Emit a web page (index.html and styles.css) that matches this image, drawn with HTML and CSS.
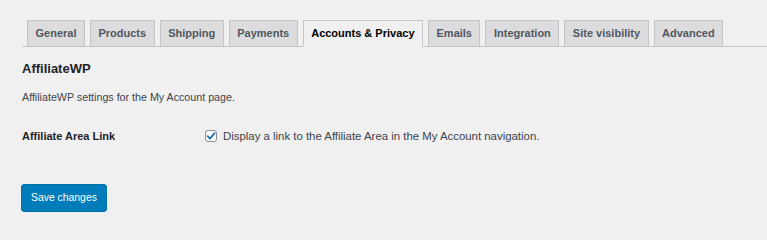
FILE: index.html
```html
<!DOCTYPE html>
<html lang="en">
<head>
<meta charset="utf-8">
<title>Accounts &amp; Privacy</title>
<link rel="stylesheet" href="styles.css">
</head>
<body>
<div class="wrap">
  <nav class="nav-tabs">
    <a class="tab">General</a>
    <a class="tab">Products</a>
    <a class="tab">Shipping</a>
    <a class="tab">Payments</a>
    <a class="tab active">Accounts &amp; Privacy</a>
    <a class="tab">Emails</a>
    <a class="tab">Integration</a>
    <a class="tab">Site visibility</a>
    <a class="tab">Advanced</a>
  </nav>
  <h2 class="section-title">AffiliateWP</h2>
  <p class="desc">AffiliateWP settings for the My Account page.</p>
  <div class="field-row">
    <div class="field-label">Affiliate Area Link</div>
    <label class="field-control">
      <span class="checkbox"><svg width="10" height="10" viewBox="0 0 10 10"><path d="M1.6 5.2 L4 7.6 L8.6 2.2" fill="none" stroke="#2271b1" stroke-width="1.9" stroke-linecap="round" stroke-linejoin="round"/></svg></span>
      <span class="check-text">Display a link to the Affiliate Area in the My Account navigation.</span>
    </label>
  </div>
  <button class="button-primary">Save changes</button>
</div>
</body>
</html>
```

FILE: styles.css
```css
html, body {
  margin: 0;
  background: #f0f0f1;
}
body {
  font-family: "Liberation Sans", Arial, sans-serif;
  color: #3c434a;
  overflow: hidden;
}
.wrap {
  padding-left: 22px;
}
.nav-tabs {
  display: flex;
  align-items: flex-end;
  padding-top: 20px;
  border-bottom: 1px solid #c3c4c7;
}
.tab {
  margin-left: 5px;
  margin-bottom: -1px;
  padding: 4px 7.5px;
  border: 1px solid #c3c4c7;
  background: #dcdcde;
  color: #50575e;
  font-size: 11px;
  line-height: 17px;
  font-weight: 700;
  white-space: nowrap;
}
.tab.active {
  background: #f0f0f1;
  border-bottom-color: #f0f0f1;
  color: #000;
}
.section-title {
  margin: 13px 0 0;
  font-size: 13px;
  line-height: 18px;
  font-weight: 700;
  color: #1d2327;
}
.desc {
  margin: 11px 0 0;
  font-size: 10.7px;
  line-height: 16px;
  color: #3c434a;
}
.field-row {
  display: flex;
  align-items: center;
  margin-top: 23px;
}
.field-label {
  width: 183px;
  font-size: 11px;
  line-height: 16px;
  font-weight: 700;
  color: #1d2327;
}
.field-control {
  display: flex;
  align-items: center;
  gap: 6px;
}
.checkbox {
  box-sizing: border-box;
  width: 12px;
  height: 12px;
  border: 1px solid #8c8f94;
  border-radius: 3px;
  background: #fff;
  display: flex;
  align-items: center;
  justify-content: center;
}
.checkbox svg {
  display: block;
}
.check-text {
  font-size: 11.4px;
  line-height: 16px;
  color: #3c434a;
}
.button-primary {
  display: block;
  margin-top: 40px;
  margin-left: -1px;
  height: 28px;
  padding: 0 9px;
  border: 1px solid #0071a8;
  border-radius: 3px;
  background: #007cba;
  color: #fff;
  font-family: "Liberation Sans", Arial, sans-serif;
  font-size: 10.4px;
  line-height: 26px;
}
```
